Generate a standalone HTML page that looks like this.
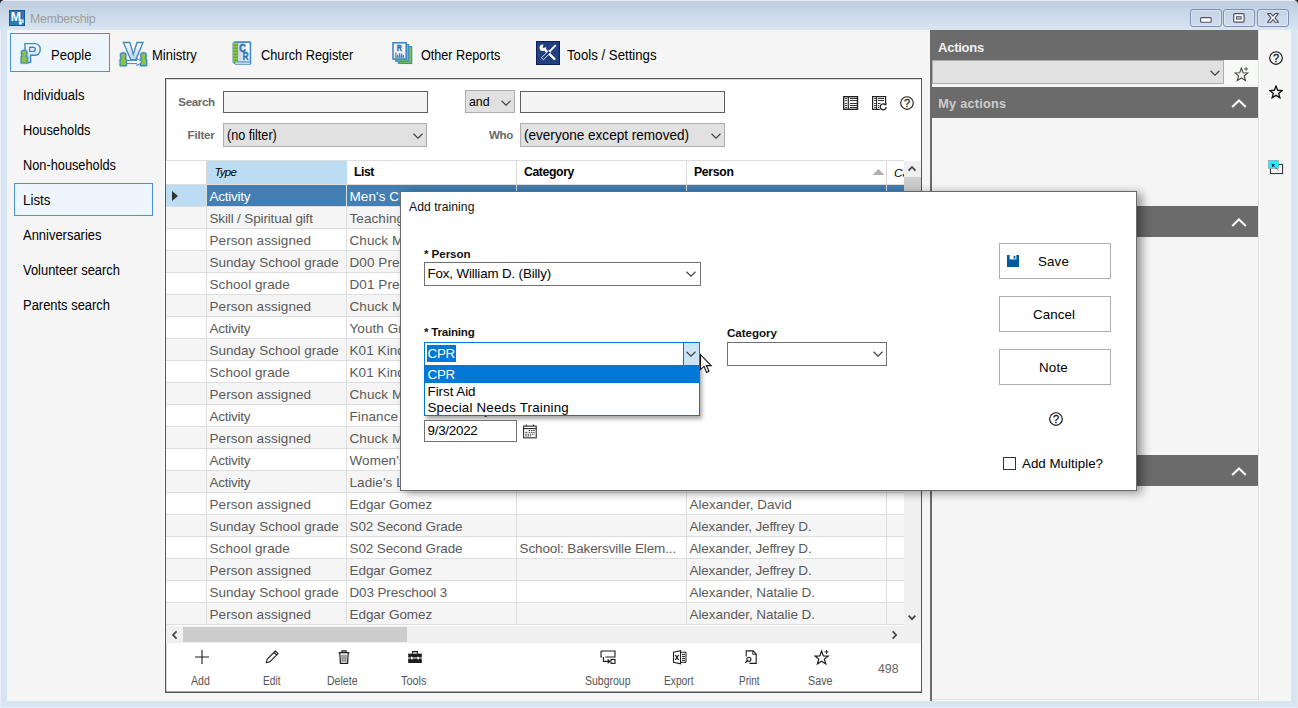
<!DOCTYPE html>
<html lang="en"><head><meta charset="utf-8"><title>Membership</title>
<style>
*{box-sizing:border-box;margin:0;padding:0}
html,body{width:1298px;height:708px;overflow:hidden}
body{position:relative;background:#d7e4f2;font-family:"Liberation Sans",sans-serif;font-size:13.33px;color:#000}
.abs,.abs>*{position:absolute}
#win{position:absolute;left:0;top:0;width:1298px;height:708px;overflow:hidden}
#win *{position:absolute;white-space:nowrap}
#titlebar{left:0;top:0;width:1298px;height:30px;background:linear-gradient(#e8ecf4 0,#e8ecf4 1px,#c0cfdf 1px,#c4d3e3 8px,#d8e5f3 30px)}
#client{left:7px;top:30px;width:1284px;height:671px;background:#f5f5f5}
#apptitle{left:30px;top:10px;font-size:12.3px;color:#9a9a9a;line-height:16px}
.tab{top:33px;height:39px;font-size:14.2px;line-height:39px;letter-spacing:-.35px}
.nav{left:23px;font-size:14px;line-height:18px;letter-spacing:-.25px}
#panel{left:165px;top:78px;width:757px;height:615px;background:#fff;border:1px solid #555;box-shadow:inset 1px 1px 0 rgba(0,0,0,.15),inset 0 -1px 0 rgba(0,0,0,.35),-1px -1px 0 #fff;height:615px}
.lbl{font-weight:bold;font-size:12px;color:#6d6d6d;line-height:16px}
.inp{background:#f4f4f4;border:1px solid #5f5f5f;height:22px}
.cmb{background:#e1e1e1;border:1px solid #adadad;height:24px;font-size:14.3px;line-height:22px;padding-left:3px}
.chev{width:9px;height:5px}
.th{top:161px;height:23px;line-height:22px;font-weight:bold;font-size:12.3px;border-right:1px solid #dcdcdc;padding-left:4px;background:#fff}
.tr{left:166px;width:738px;height:22px;border-bottom:1px solid #dedede;background:#fff;color:#5a5a5a;font-size:13.5px;line-height:24px}
.tr.alt{background:#f5f5f5}
.tr.sel{color:#fff}
.c{top:0;height:21px;overflow:hidden;border-right:1px solid #dedede;padding-left:2.5px}
.c0{left:0;width:41px;padding:0}.c1{left:41px;width:140px}.c2{left:181px;width:170px}.c3{left:351px;width:170px}.c4{left:521px;width:200px}.c5{left:721px;width:17px;border-right:0}
.sel .c1,.sel .c2,.sel .c3,.sel .c4,.sel .c5{background:#437fb3;border-right-color:#dedede}
.sel .c0{background:#bcdcf4}
.tri{left:6px;top:6px;width:0;height:0;border-left:6px solid #333;border-top:5px solid transparent;border-bottom:5px solid transparent}
.tool{top:672px;font-size:12px;color:#555;line-height:16px;letter-spacing:-.5px}
.hdr{left:932px;width:326px;background:#6b6b6b;color:#f0f0f0;font-weight:bold;font-size:13px}
#dlg{left:400px;top:191px;width:737px;height:300px;background:#fff;border:1px solid #6a6a6a;box-shadow:5px 2px 9px rgba(0,0,0,.4)}
.dl{font-weight:bold;font-size:11.5px;line-height:14px;color:#111}
.btn{width:112px;height:36px;border:1px solid #adadad;background:#fff}
.dcmb{background:#fff;border:1px solid #707070}
.wbtn{top:9px;width:32px;height:18px;border:1px solid #7d8fb2;border-radius:3px;background:linear-gradient(#c6d4e6,#cfdcec);box-shadow:inset 0 0 0 1px rgba(255,255,255,.35)}
#win b{position:static;font-weight:inherit}
</style></head><body>
<div id="win">
<div id="titlebar"></div>
<svg style="left:0px;top:0px;" width="5" height="5" viewBox="0 0 5 5"><path d="M0 0 H3.6 Q0.6 0.8 0 3.6 Z" fill="#222"/></svg>
<svg style="left:1293px;top:0px;" width="5" height="5" viewBox="0 0 5 5"><path d="M5 0 H1.4 Q4.4 0.8 5 3.6 Z" fill="#222"/></svg>
<svg style="left:9px;top:10px;" width="16" height="16" viewBox="0 0 16 16"><rect x="0.4" y="0.4" width="15.2" height="15.2" fill="#2b7bb8" stroke="#0e4c8c" stroke-width="0.9"/><text x="1.8" y="11.3" font-family="Liberation Sans,sans-serif" font-weight="bold" font-size="12" fill="#fff" textLength="10.2" lengthAdjust="spacingAndGlyphs">M</text><circle cx="11.4" cy="10.4" r="1.3" fill="#fff"/><path d="M9.9 14.4 V12.6 Q9.9 11.7 11.4 11.7 Q12.9 11.7 12.9 12.6 V14.4 Z" fill="#fff"/><rect x="12.4" y="9.4" width="2.4" height="3.6" fill="#b9d6ee"/></svg>
<span style="left:30px;top:10.70px;line-height:16px;font-size:12.3px;color:#9c9c9c;letter-spacing:-0.217px;">Membership</span>
<div class="wbtn" style="left:1190px"><svg style="left:8px;top:6px;" width="14" height="8" viewBox="0 0 14 8"><rect x="1.6" y="1.6" width="10.6" height="4.6" rx="1" fill="#fff" stroke="#4d5266" stroke-width="1.1"/></svg></div>
<div class="wbtn" style="left:1223px"><svg style="left:8px;top:2px;" width="14" height="12" viewBox="0 0 14 12"><rect x="1.7" y="1.7" width="10.4" height="8.4" rx="1.2" fill="#fff" stroke="#4d5266" stroke-width="1.2"/><rect x="4.6" y="4.7" width="4.6" height="2.4" fill="#cfdcec" stroke="#4d5266" stroke-width="1"/></svg></div>
<div class="wbtn" style="left:1257px"><svg style="left:8px;top:2px;" width="14" height="12" viewBox="0 0 14 12"><path d="M1.6 1.6 H4.9 L7 4.1 L9.1 1.6 H12.4 L9 5.9 L12.4 10.2 H9.1 L7 7.7 L4.9 10.2 H1.6 L5 5.9 Z" fill="#fff" stroke="#4d5266" stroke-width="1.1" stroke-linejoin="round"/></svg></div>
<div style="left:0;top:30px;width:1px;height:678px;background:#e9edf5"></div><div style="left:1297px;top:30px;width:1px;height:678px;background:#e9edf5"></div><div style="left:0;top:707px;width:1298px;height:1px;background:#e9edf5"></div>
<div id="client"></div>
<div style="left:10px;top:33px;width:100px;height:39px;border:1px solid #4a90e2;background:#eef6fd"></div>
<svg style="left:19px;top:40px;" width="24" height="26" viewBox="0 0 24 26"><defs><linearGradient id="gp" x1="0" y1="0" x2="0" y2="1"><stop offset="0" stop-color="#fff"/><stop offset="1" stop-color="#bfcde9"/></linearGradient><linearGradient id="gc" x1="0" y1="0" x2="1" y2="0"><stop offset="0" stop-color="#c3d2ea"/><stop offset="1" stop-color="#fff"/></linearGradient></defs><path d="M6 3.6 H15.2 Q21.2 3.6 21.2 9.4 Q21.2 15.3 15.2 15.3 H11.6 V22.6 H6 Z M10.6 7.2 V11.4 H14.4 Q16.2 11.4 16.2 9.3 Q16.2 7.2 14.4 7.2 Z" fill="url(#gp)" fill-rule="evenodd" stroke="#3b88c3" stroke-width="1.4" stroke-linejoin="round"/><g fill="none" stroke="#3b88c3" stroke-opacity=".3" stroke-width="2.6" stroke-linejoin="round"><path d="M2.10 23.00 V17.80 Q2.10 15.50 5.20 15.50 Q8.30 15.50 8.30 17.80 V23.00 Z"/><circle cx="5.2" cy="13.10" r="2.8"/></g><g fill="#8cc63f" stroke="#3b88c3" stroke-width="1.1" stroke-linejoin="round"><path d="M2.10 23.00 V17.80 Q2.10 15.50 5.20 15.50 Q8.30 15.50 8.30 17.80 V23.00 Z"/><circle cx="5.2" cy="13.10" r="2.8"/></g><rect x="3.60" y="14.80" width="3.2" height="2" fill="#8cc63f"/></svg>
<span style="left:51px;top:46.32px;line-height:18px;font-size:14.67px;transform:scaleX(0.8867);transform-origin:0 50%;">People</span>
<svg style="left:117px;top:40px;" width="32" height="28" viewBox="0 0 32 28"><path d="M6.4 2.5 H12.8 L16.3 14.3 L20 2.5 H26 L18.7 20 H13.9 Z" fill="url(#gp)" stroke="#3b88c3" stroke-width="1.3" stroke-linejoin="miter"/><g fill="none" stroke="#3b88c3" stroke-opacity=".3" stroke-width="2.6" stroke-linejoin="round"><path d="M3.10 25.60 V20.40 Q3.10 18.10 6.20 18.10 Q9.30 18.10 9.30 20.40 V25.60 Z"/><circle cx="6.2" cy="15.70" r="2.8"/></g><g fill="#8cc63f" stroke="#3b88c3" stroke-width="1.1" stroke-linejoin="round"><path d="M3.10 25.60 V20.40 Q3.10 18.10 6.20 18.10 Q9.30 18.10 9.30 20.40 V25.60 Z"/><circle cx="6.2" cy="15.70" r="2.8"/></g><rect x="4.60" y="17.40" width="3.2" height="2" fill="#8cc63f"/><g fill="none" stroke="#3b88c3" stroke-opacity=".3" stroke-width="2.6" stroke-linejoin="round"><path d="M23.40 25.60 V20.40 Q23.40 18.10 26.50 18.10 Q29.60 18.10 29.60 20.40 V25.60 Z"/><circle cx="26.5" cy="15.70" r="2.8"/></g><g fill="#8cc63f" stroke="#3b88c3" stroke-width="1.1" stroke-linejoin="round"><path d="M23.40 25.60 V20.40 Q23.40 18.10 26.50 18.10 Q29.60 18.10 29.60 20.40 V25.60 Z"/><circle cx="26.5" cy="15.70" r="2.8"/></g><rect x="24.90" y="17.40" width="3.2" height="2" fill="#8cc63f"/><path d="M9.6 20.4 H20 V18.4 L25 22 L20 25.6 V23.6 H9.6 Z" fill="#fff" stroke="#3b88c3" stroke-width="1"/></svg>
<span style="left:152px;top:46.32px;line-height:18px;font-size:14.67px;transform:scaleX(0.8867);transform-origin:0 50%;">Ministry</span>
<svg style="left:231px;top:40px;" width="22" height="26" viewBox="0 0 22 26"><path d="M3.4 1.2 H18.8 Q20.2 1.2 20.2 2.6 V23.4 Q20.2 24.8 18.8 24.8 H4.4 L1.6 22.4 V3 Z" fill="#3e8ac6"/><rect x="4.2" y="22.4" width="14.8" height="1.6" fill="#c4d9ee"/><rect x="7" y="3" width="11.6" height="18.4" fill="url(#gc)"/><rect x="1.9" y="2.6" width="5" height="19.6" fill="#8cc63f"/><path d="M1.9 5.2 H6.9 M1.9 8.2 H6.9 M1.9 11.2 H6.9 M1.9 14.2 H6.9 M1.9 17.2 H6.9 M1.9 20.2 H6.9" stroke="#4f9a3a" stroke-width="0.9"/><text x="8.2" y="12.2" font-family="Liberation Sans,sans-serif" font-weight="bold" font-size="11.8" fill="#2a72b2" stroke="#2a72b2" stroke-width="0.45" textLength="6.6" lengthAdjust="spacingAndGlyphs">C</text><text x="11.8" y="20.4" font-family="Liberation Sans,sans-serif" font-weight="bold" font-size="10.6" fill="#2a72b2" stroke="#2a72b2" stroke-width="0.45" textLength="5.8" lengthAdjust="spacingAndGlyphs">R</text></svg>
<span style="left:261px;top:46.32px;line-height:18px;font-size:14.67px;transform:scaleX(0.8709);transform-origin:0 50%;">Church Register</span>
<svg style="left:391px;top:41px;" width="23" height="25" viewBox="0 0 23 25"><rect x="7.6" y="5.8" width="13" height="16.6" fill="#8cc63f" stroke="#3e8ac6" stroke-width="1.3"/><rect x="4.7" y="3.8" width="13" height="16.4" fill="#8cc63f" stroke="#3e8ac6" stroke-width="1.3"/><rect x="2" y="1.8" width="13.2" height="16.2" fill="#f2f5fb" stroke="#3e8ac6" stroke-width="1.6"/><text x="5.8" y="10" font-family="Liberation Sans,sans-serif" font-weight="bold" font-size="9.6" fill="#2a72b2" stroke="#2a72b2" stroke-width="0.45" textLength="5.2" lengthAdjust="spacingAndGlyphs">R</text><g fill="#3f7fbf"><rect x="4.2" y="11.4" width="1.2" height="5"/><rect x="6" y="13.6" width="1.3" height="2.6"/><rect x="7.9" y="12.2" width="1.4" height="4"/><rect x="9.9" y="12.6" width="1.4" height="3.6"/><rect x="11.7" y="14" width="1.3" height="2.2"/><rect x="4.2" y="15.6" width="9" height="1"/></g></svg>
<span style="left:421px;top:46.32px;line-height:18px;font-size:14.67px;transform:scaleX(0.8608);transform-origin:0 50%;">Other Reports</span>
<svg style="left:536px;top:41px;" width="24" height="24" viewBox="0 0 24 24"><rect x="0.5" y="0.5" width="23" height="23" fill="#22407f" stroke="#0c1f58" stroke-width="1"/><path d="M8.6 8.4 L18.4 17.8" stroke="#fff" stroke-width="2.3" stroke-linecap="round"/><circle cx="6.9" cy="6.7" r="3.3" fill="#fff"/><path d="M6.6 7 L8 1.6 L12.4 5.8 Z" fill="#22407f"/><path d="M19.3 4.7 L13.6 10.4" stroke="#fff" stroke-width="1.9" stroke-linecap="round"/><path d="M12.6 9.6 L14.6 11.6 L7.4 18.8 L5.4 16.8 Z" fill="#22407f" stroke="#e8f0ff" stroke-width="0.9"/></svg>
<span style="left:567px;top:46.32px;line-height:18px;font-size:14.67px;transform:scaleX(0.9008);transform-origin:0 50%;">Tools / Settings</span>
<div style="left:14px;top:183px;width:139px;height:33px;border:1px solid #4a90e2;background:#eef6fd"></div>
<span style="left:23px;top:86.15px;line-height:18px;font-size:14px;transform:scaleX(0.9297);transform-origin:0 50%;">Individuals</span>
<span style="left:23px;top:121.15px;line-height:18px;font-size:14px;transform:scaleX(0.9129);transform-origin:0 50%;">Households</span>
<span style="left:23px;top:156.15px;line-height:18px;font-size:14px;transform:scaleX(0.9121);transform-origin:0 50%;">Non-households</span>
<span style="left:23px;top:191.15px;line-height:18px;font-size:14px;transform:scaleX(0.9553);transform-origin:0 50%;">Lists</span>
<span style="left:23px;top:226.15px;line-height:18px;font-size:14px;transform:scaleX(0.9256);transform-origin:0 50%;">Anniversaries</span>
<span style="left:23px;top:261.15px;line-height:18px;font-size:14px;transform:scaleX(0.9232);transform-origin:0 50%;">Volunteer search</span>
<span style="left:23px;top:296.15px;line-height:18px;font-size:14px;transform:scaleX(0.9240);transform-origin:0 50%;">Parents search</span>
<div id="panel"></div>
<span style="left:178.3px;top:94.00px;line-height:16px;font-size:11.6px;font-weight:bold;color:#6a6a6a;letter-spacing:-0.382px;">Search</span>
<div class="inp" style="left:223px;top:91px;width:205px"></div>
<div class="cmb" style="left:465px;top:90px;width:50px;height:23px"></div>
<span style="left:469px;top:93.30px;line-height:18px;font-size:12.4px;letter-spacing:-0.064px;">and</span>
<svg style="left:501px;top:99.5px;" width="10" height="6" viewBox="0 0 10 6"><path d="M0.5 0.8 L5 5.2 L9.5 0.8" fill="none" stroke="#444" stroke-width="1.2"/></svg>
<div class="inp" style="left:520px;top:91px;width:205px"></div>
<span style="left:187.6px;top:127.00px;line-height:16px;font-size:11.6px;font-weight:bold;color:#6a6a6a;letter-spacing:-0.227px;">Filter</span>
<div class="cmb" style="left:223px;top:123px;width:204px"></div>
<span style="left:227.3px;top:126.30px;line-height:18px;font-size:14px;transform:scaleX(0.9016);transform-origin:0 50%;">(no filter)</span>
<svg style="left:413px;top:133px;" width="10" height="6" viewBox="0 0 10 6"><path d="M0.5 0.8 L5 5.2 L9.5 0.8" fill="none" stroke="#444" stroke-width="1.2"/></svg>
<span style="left:489px;top:127.00px;line-height:16px;font-size:11.6px;font-weight:bold;color:#6a6a6a;letter-spacing:-0.373px;">Who</span>
<div class="cmb" style="left:520px;top:123px;width:205px"></div>
<span style="left:524px;top:126.30px;line-height:18px;font-size:14px;transform:scaleX(0.9682);transform-origin:0 50%;">(everyone except removed)</span>
<svg style="left:711px;top:133px;" width="10" height="6" viewBox="0 0 10 6"><path d="M0.5 0.8 L5 5.2 L9.5 0.8" fill="none" stroke="#444" stroke-width="1.2"/></svg>
<svg style="left:843px;top:96px;" width="16" height="14" viewBox="0 0 16 14"><rect x="0.7" y="0.7" width="13.8" height="12.6" fill="#fff" stroke="#222" stroke-width="1.4"/><path d="M5.3 1 V13" stroke="#222" stroke-width="1.2"/><path shape-rendering="crispEdges" d="M6.6 2.5 H13.6 M6.6 4.5 H13.6 M6.6 7.5 H13.6 M6.6 9.5 H13.6 M6.6 11.5 H13.6" stroke="#333" stroke-width="1"/><path shape-rendering="crispEdges" d="M2 2.5 H4 M2 4.5 H4 M2 7.5 H4 M2 9.5 H4 M2 11.5 H4" stroke="#444" stroke-width="1"/></svg>
<svg style="left:872px;top:96px;" width="17" height="16" viewBox="0 0 17 16"><rect x="0.6" y="0.6" width="13" height="12.8" fill="#fff" stroke="#222" stroke-width="1.2"/><path d="M4.6 1 V13" stroke="#222" stroke-width="1.1"/><path shape-rendering="crispEdges" d="M6 2.5 H12.4 M6 4.5 H12.4 M6 7.5 H9 M6 9.5 H8 M6 11.5 H8" stroke="#333" stroke-width="1"/><path shape-rendering="crispEdges" d="M1.8 2.5 H3.6 M1.8 4.5 H3.6 M1.8 7.5 H3.6 M1.8 9.5 H3.6 M1.8 11.5 H3.6" stroke="#444" stroke-width="1"/><circle cx="11.2" cy="10.7" r="4.3" fill="#fff"/><path d="M13.6 9 A3 3 0 1 0 14.2 10.9" fill="none" stroke="#222" stroke-width="1.3"/><path d="M11.8 8.6 L14.4 9.4 L14.6 6.8 Z" fill="#222"/></svg>
<svg style="left:899px;top:95px;" width="16" height="16" viewBox="0 0 16 16"><circle cx="8" cy="8" r="6.3" fill="none" stroke="#222" stroke-width="1.15"/><text x="8" y="11.9" text-anchor="middle" font-family="Liberation Sans,sans-serif" font-size="11" stroke="#222" stroke-width="0.3" fill="#222">?</text></svg>
<div style="left:166px;top:160px;width:738px;height:1px;background:#dedede"></div>
<div class="th" style="left:166px;width:41px"></div>
<div class="th" style="left:207px;width:140px;background:#bcdcf4;border-right-color:#bcdcf4"></div>
<div class="th" style="left:347px;width:170px"></div>
<div class="th" style="left:517px;width:170px"></div>
<div class="th" style="left:687px;width:200px"></div>
<div class="th" style="left:887px;width:17px;border-right:0;overflow:hidden"></div>
<span style="left:214.5px;top:163.50px;line-height:16px;font-size:11.4px;font-style:italic;letter-spacing:-0.750px;">Type</span>
<span style="left:354px;top:163.80px;line-height:16px;font-size:12.2px;font-weight:bold;letter-spacing:-0.422px;">List</span>
<span style="left:524px;top:163.80px;line-height:16px;font-size:12.2px;font-weight:bold;letter-spacing:-0.360px;">Category</span>
<span style="left:694px;top:163.80px;line-height:16px;font-size:12.2px;font-weight:bold;letter-spacing:-0.293px;">Person</span>
<div style="left:894px;top:164px;width:10px;height:18px;overflow:hidden"><span style="left:0px;top:1.00px;line-height:16px;font-size:11.8px;font-style:italic;">Ca</span></div>
<svg style="left:872px;top:168px;" width="13" height="8" viewBox="0 0 13 8"><path d="M0.5 7 L6.5 1 L12.5 7 Z" fill="#b0b0b0"/></svg>
<div style="left:166px;top:184px;width:738px;height:1px;background:#dedede"></div>
<div class="tr sel" style="top:185px"><span class="c c0"><i class="tri"></i></span><span class="c c1"><b style="letter-spacing:-0.257px">Activity</b></span><span class="c c2"><b style="letter-spacing:0.081px">Men's Club</b></span><span class="c c3"></span><span class="c c4"><b style="letter-spacing:0.021px">Alexander, David</b></span><span class="c c5"></span></div>
<div class="tr alt" style="top:207px"><span class="c c0"></span><span class="c c1"><b style="letter-spacing:-0.147px">Skill / Spiritual gift</b></span><span class="c c2"><b style="letter-spacing:0.081px">Teaching</b></span><span class="c c3"></span><span class="c c4"><b style="letter-spacing:0.021px">Alexander, David</b></span><span class="c c5"></span></div>
<div class="tr " style="top:229px"><span class="c c0"></span><span class="c c1"><b style="letter-spacing:0.076px">Person assigned</b></span><span class="c c2"><b style="letter-spacing:0.080px">Chuck Martin</b></span><span class="c c3"></span><span class="c c4"><b style="letter-spacing:0.021px">Alexander, David</b></span><span class="c c5"></span></div>
<div class="tr alt" style="top:251px"><span class="c c0"></span><span class="c c1"><b style="letter-spacing:0.016px">Sunday School grade</b></span><span class="c c2"><b style="letter-spacing:0.082px">D00 Preschool</b></span><span class="c c3"></span><span class="c c4"><b style="letter-spacing:0.021px">Alexander, David</b></span><span class="c c5"></span></div>
<div class="tr " style="top:273px"><span class="c c0"></span><span class="c c1"><b style="letter-spacing:0.070px">School grade</b></span><span class="c c2"><b style="letter-spacing:0.082px">D01 Preschool</b></span><span class="c c3"></span><span class="c c4"><b style="letter-spacing:0.021px">Alexander, David</b></span><span class="c c5"></span></div>
<div class="tr alt" style="top:295px"><span class="c c0"></span><span class="c c1"><b style="letter-spacing:0.076px">Person assigned</b></span><span class="c c2"><b style="letter-spacing:0.080px">Chuck Martin</b></span><span class="c c3"></span><span class="c c4"><b style="letter-spacing:0.021px">Alexander, David</b></span><span class="c c5"></span></div>
<div class="tr " style="top:317px"><span class="c c0"></span><span class="c c1"><b style="letter-spacing:-0.257px">Activity</b></span><span class="c c2"><b style="letter-spacing:0.082px">Youth Group</b></span><span class="c c3"></span><span class="c c4"><b style="letter-spacing:0.021px">Alexander, David</b></span><span class="c c5"></span></div>
<div class="tr alt" style="top:339px"><span class="c c0"></span><span class="c c1"><b style="letter-spacing:0.016px">Sunday School grade</b></span><span class="c c2"><b style="letter-spacing:0.079px">K01 Kindergarten</b></span><span class="c c3"></span><span class="c c4"><b style="letter-spacing:0.021px">Alexander, David</b></span><span class="c c5"></span></div>
<div class="tr " style="top:361px"><span class="c c0"></span><span class="c c1"><b style="letter-spacing:0.070px">School grade</b></span><span class="c c2"><b style="letter-spacing:0.079px">K01 Kindergarten</b></span><span class="c c3"></span><span class="c c4"><b style="letter-spacing:0.021px">Alexander, David</b></span><span class="c c5"></span></div>
<div class="tr alt" style="top:383px"><span class="c c0"></span><span class="c c1"><b style="letter-spacing:0.076px">Person assigned</b></span><span class="c c2"><b style="letter-spacing:0.080px">Chuck Martin</b></span><span class="c c3"></span><span class="c c4"><b style="letter-spacing:0.021px">Alexander, David</b></span><span class="c c5"></span></div>
<div class="tr " style="top:405px"><span class="c c0"></span><span class="c c1"><b style="letter-spacing:-0.257px">Activity</b></span><span class="c c2"><b style="letter-spacing:0.083px">Finance Committee</b></span><span class="c c3"></span><span class="c c4"><b style="letter-spacing:0.021px">Alexander, David</b></span><span class="c c5"></span></div>
<div class="tr alt" style="top:427px"><span class="c c0"></span><span class="c c1"><b style="letter-spacing:0.076px">Person assigned</b></span><span class="c c2"><b style="letter-spacing:0.080px">Chuck Martin</b></span><span class="c c3"></span><span class="c c4"><b style="letter-spacing:0.021px">Alexander, David</b></span><span class="c c5"></span></div>
<div class="tr " style="top:449px"><span class="c c0"></span><span class="c c1"><b style="letter-spacing:-0.257px">Activity</b></span><span class="c c2"><b style="letter-spacing:0.089px">Women's Group</b></span><span class="c c3"></span><span class="c c4"><b style="letter-spacing:0.021px">Alexander, David</b></span><span class="c c5"></span></div>
<div class="tr alt" style="top:471px"><span class="c c0"></span><span class="c c1"><b style="letter-spacing:-0.257px">Activity</b></span><span class="c c2"><b style="letter-spacing:0.079px">Ladie's Luncheon</b></span><span class="c c3"></span><span class="c c4"><b style="letter-spacing:0.021px">Alexander, David</b></span><span class="c c5"></span></div>
<div class="tr " style="top:493px"><span class="c c0"></span><span class="c c1"><b style="letter-spacing:0.076px">Person assigned</b></span><span class="c c2"><b style="letter-spacing:-0.053px">Edgar Gomez</b></span><span class="c c3"></span><span class="c c4"><b style="letter-spacing:0.021px">Alexander, David</b></span><span class="c c5"></span></div>
<div class="tr alt" style="top:515px"><span class="c c0"></span><span class="c c1"><b style="letter-spacing:0.016px">Sunday School grade</b></span><span class="c c2"><b style="letter-spacing:-0.114px">S02 Second Grade</b></span><span class="c c3"></span><span class="c c4"><b style="letter-spacing:-0.146px">Alexander, Jeffrey D.</b></span><span class="c c5"></span></div>
<div class="tr " style="top:537px"><span class="c c0"></span><span class="c c1"><b style="letter-spacing:0.070px">School grade</b></span><span class="c c2"><b style="letter-spacing:-0.114px">S02 Second Grade</b></span><span class="c c3"><b style="letter-spacing:-0.119px">School: Bakersville Elem...</b></span><span class="c c4"><b style="letter-spacing:-0.146px">Alexander, Jeffrey D.</b></span><span class="c c5"></span></div>
<div class="tr alt" style="top:559px"><span class="c c0"></span><span class="c c1"><b style="letter-spacing:0.076px">Person assigned</b></span><span class="c c2"><b style="letter-spacing:-0.053px">Edgar Gomez</b></span><span class="c c3"></span><span class="c c4"><b style="letter-spacing:-0.146px">Alexander, Jeffrey D.</b></span><span class="c c5"></span></div>
<div class="tr " style="top:581px"><span class="c c0"></span><span class="c c1"><b style="letter-spacing:0.016px">Sunday School grade</b></span><span class="c c2"><b style="letter-spacing:-0.140px">D03 Preschool 3</b></span><span class="c c3"></span><span class="c c4"><b style="letter-spacing:-0.067px">Alexander, Natalie D.</b></span><span class="c c5"></span></div>
<div class="tr alt" style="top:603px"><span class="c c0"></span><span class="c c1"><b style="letter-spacing:0.076px">Person assigned</b></span><span class="c c2"><b style="letter-spacing:-0.053px">Edgar Gomez</b></span><span class="c c3"></span><span class="c c4"><b style="letter-spacing:-0.067px">Alexander, Natalie D.</b></span><span class="c c5"></span></div>
<div style="left:904px;top:161px;width:17px;height:465px;background:#f0f0f0"></div>
<div style="left:904px;top:177px;width:17px;height:18px;background:#cdcdcd"></div>
<svg style="left:906px;top:164px;" width="12" height="9" viewBox="0 0 12 9"><path d="M2.6 6.6 L6 3 L9.4 6.6" fill="none" stroke="#444" stroke-width="1.7"/></svg>
<svg style="left:906px;top:613px;" width="12" height="9" viewBox="0 0 12 9"><path d="M2.6 2.6 L6 6.2 L9.4 2.6" fill="none" stroke="#444" stroke-width="1.7"/></svg>
<div style="left:166px;top:626px;width:755px;height:17px;background:#f0f0f0"></div>
<div style="left:183px;top:627px;width:224px;height:15px;background:#cdcdcd"></div>
<svg style="left:170px;top:629px;" width="9" height="12" viewBox="0 0 9 12"><path d="M6.6 2.4 L3 6 L6.6 9.6" fill="none" stroke="#444" stroke-width="1.7"/></svg>
<svg style="left:890px;top:629px;" width="9" height="12" viewBox="0 0 9 12"><path d="M2.6 2.4 L6.2 6 L2.6 9.6" fill="none" stroke="#444" stroke-width="1.7"/></svg>
<svg style="left:194px;top:648.5px;" width="16" height="16" viewBox="0 0 16 16"><path d="M8 1 V15 M1 8 H15" stroke="#1c1c1c" stroke-width="1.1"/></svg>
<svg style="left:264px;top:649px;" width="16" height="16" viewBox="0 0 16 16"><path d="M2.2 13.8 L3.2 10.2 L11.4 2 L14 4.6 L5.8 12.8 Z M10 3.4 L12.6 6" fill="none" stroke="#1c1c1c" stroke-width="1.1" stroke-linejoin="round"/></svg>
<svg style="left:336px;top:649px;" width="16" height="16" viewBox="0 0 16 16"><path d="M2.6 3.6 H13.4 M6 3.4 V1.8 H10 V3.4 M3.8 3.8 L4.4 14.4 H11.6 L12.2 3.8" fill="none" stroke="#1c1c1c" stroke-width="1.2"/><path d="M6.1 5.6 V12.8 M8 5.6 V12.8 M9.9 5.6 V12.8" stroke="#1c1c1c" stroke-width="0.8"/></svg>
<svg style="left:407px;top:650px;" width="16" height="14" viewBox="0 0 16 14"><path d="M5.6 3.6 V1.6 H10.4 V3.6" fill="none" stroke="#1c1c1c" stroke-width="1.2"/><rect x="1.2" y="3.6" width="13.6" height="9.4" fill="#1c1c1c"/><path d="M1 8 H15" stroke="#fff" stroke-width="1"/><rect x="4" y="6.8" width="1.6" height="2.6" fill="#fff"/><rect x="10.4" y="6.8" width="1.6" height="2.6" fill="#fff"/></svg>
<svg style="left:600px;top:650px;" width="17" height="15" viewBox="0 0 17 15"><path d="M1 1 H15 V7 H5.4" fill="none" stroke="#1c1c1c" stroke-width="1.1"/><path d="M1 1 V7 H2" fill="none" stroke="#1c1c1c" stroke-width="1.1"/><path d="M3.4 7 V11.4 H9.4 M7.6 9.4 L9.8 11.4 L7.6 13.4" fill="none" stroke="#1c1c1c" stroke-width="1.1"/><rect x="11" y="9.4" width="4" height="4" fill="none" stroke="#1c1c1c" stroke-width="1.1"/></svg>
<svg style="left:671px;top:650px;" width="16" height="15" viewBox="0 0 16 15"><path d="M2.5 2.2 L9.5 0.7 V13.8 L2.5 12.3 Z" fill="none" stroke="#1c1c1c" stroke-width="1.1"/><path d="M4.3 5 L7.6 10 M7.6 5 L4.3 10" stroke="#1c1c1c" stroke-width="1.3"/><path d="M9.5 2.2 H15 V12.3 H9.5" fill="none" stroke="#1c1c1c" stroke-width="1"/><path d="M11 4.4 H14 M11 6.4 H14 M11 8.4 H14 M11 10.4 H14" stroke="#1c1c1c" stroke-width="1"/></svg>
<svg style="left:742px;top:649px;" width="16" height="17" viewBox="0 0 16 17"><path d="M4.2 7.6 V1.9 H11 L14.2 5.1 V14.4 H7.4" fill="none" stroke="#1c1c1c" stroke-width="1.1"/><path d="M10.8 2.1 V5.3 H14" fill="none" stroke="#1c1c1c" stroke-width="0.9"/><circle cx="6.9" cy="10.2" r="2" fill="#fff" stroke="#1c1c1c" stroke-width="1.1"/><path d="M5.4 11.7 L3.2 13.9" stroke="#1c1c1c" stroke-width="1.3"/></svg>
<svg style="left:814.3px;top:649px;" width="17.2" height="17.2" viewBox="0 0 17.2 17.2"><path d="M7.60 2.00 L9.36 6.84 L14.20 7.06 L10.46 10.14 L11.78 14.98 L7.60 12.23 L3.42 14.98 L4.74 10.14 L1.00 7.06 L5.84 6.84 Z" fill="none" stroke="#1c1c1c" stroke-width="1.2" stroke-linejoin="miter"/><path d="M10.50 2.90 H14.50 M12.50 0.90 V4.90" stroke="#1c1c1c" stroke-width="0.9"/></svg>
<span style="left:190.8px;top:672.64px;line-height:16px;font-size:12px;color:#555;transform:scaleX(0.8805);transform-origin:0 50%;">Add</span>
<span style="left:263px;top:672.64px;line-height:16px;font-size:12px;color:#555;transform:scaleX(0.8463);transform-origin:0 50%;">Edit</span>
<span style="left:327px;top:672.64px;line-height:16px;font-size:12px;color:#555;transform:scaleX(0.8793);transform-origin:0 50%;">Delete</span>
<span style="left:401px;top:672.64px;line-height:16px;font-size:12px;color:#555;transform:scaleX(0.9103);transform-origin:0 50%;">Tools</span>
<span style="left:585px;top:672.64px;line-height:16px;font-size:12px;color:#555;transform:scaleX(0.8743);transform-origin:0 50%;">Subgroup</span>
<span style="left:664px;top:672.64px;line-height:16px;font-size:12px;color:#555;transform:scaleX(0.8506);transform-origin:0 50%;">Export</span>
<span style="left:739px;top:672.64px;line-height:16px;font-size:12px;color:#555;transform:scaleX(0.8308);transform-origin:0 50%;">Print</span>
<span style="left:808px;top:672.64px;line-height:16px;font-size:12px;color:#555;transform:scaleX(0.8957);transform-origin:0 50%;">Save</span>
<span style="left:878px;top:661.00px;line-height:16px;font-size:12px;color:#666;transform:scaleX(1.0240);transform-origin:0 50%;">498</span>
<div style="left:930px;top:30px;width:2px;height:671px;background:#6b6b6b"></div>
<div style="left:1258px;top:30px;width:1px;height:670px;background:#e0e0e0"></div>
<div style="left:1259px;top:30px;width:1px;height:671px;background:#fff"></div>
<div style="left:932px;top:699px;width:327px;height:1px;background:#e0e0e0"></div>
<div style="left:932px;top:700px;width:328px;height:1px;background:#fff"></div>
<div class="hdr" style="top:30px;height:30px"></div>
<span style="left:938px;top:39.50px;line-height:16px;font-size:13px;font-weight:bold;color:#f2f2f2;letter-spacing:-0.239px;">Actions</span>
<div class="cmb" style="left:932px;top:60px;width:292px"></div>
<svg style="left:1210px;top:70px;" width="10" height="6" viewBox="0 0 10 6"><path d="M0.5 0.8 L5 5.2 L9.5 0.8" fill="none" stroke="#444" stroke-width="1.2"/></svg>
<div style="left:1224px;top:60px;width:34px;height:24px;background:#f7f9f7"></div>
<svg style="left:1233.5px;top:66px;" width="16.8" height="16.8" viewBox="0 0 16.8 16.8"><path d="M7.40 2.00 L9.11 6.69 L13.80 6.91 L10.17 9.89 L11.45 14.59 L7.40 11.92 L3.35 14.59 L4.63 9.89 L1.00 6.91 L5.69 6.69 Z" fill="none" stroke="#444" stroke-width="1.1" stroke-linejoin="miter"/><path d="M10.10 2.90 H14.10 M12.10 0.90 V4.90" stroke="#444" stroke-width="0.9"/></svg>
<div class="hdr" style="top:87px;height:31px"></div>
<span style="left:938.3px;top:95.70px;line-height:16px;font-size:12.7px;font-weight:bold;color:#cdcdcd;letter-spacing:0.237px;">My actions</span>
<svg style="left:1231px;top:98.5px;" width="16" height="9" viewBox="0 0 16 9"><path d="M1.2 8 L8 1.5 L14.8 8" fill="none" stroke="#fff" stroke-width="2"/></svg>
<div class="hdr" style="top:206px;height:31px"></div>
<svg style="left:1231px;top:217.5px;" width="16" height="9" viewBox="0 0 16 9"><path d="M1.2 8 L8 1.5 L14.8 8" fill="none" stroke="#fff" stroke-width="2"/></svg>
<div class="hdr" style="top:455px;height:31px"></div>
<svg style="left:1231px;top:466.5px;" width="16" height="9" viewBox="0 0 16 9"><path d="M1.2 8 L8 1.5 L14.8 8" fill="none" stroke="#fff" stroke-width="2"/></svg>
<svg style="left:1268px;top:50px;" width="16" height="16" viewBox="0 0 16 16"><circle cx="8" cy="8" r="6.3" fill="none" stroke="#111" stroke-width="1.15"/><text x="8" y="11.9" text-anchor="middle" font-family="Liberation Sans,sans-serif" font-size="11" stroke="#111" stroke-width="0.3" fill="#111">?</text></svg>
<svg style="left:1269px;top:85px;" width="14" height="14" viewBox="0 0 16 16"><path d="M8 1.2 L9.9 6 L15 6.3 L11 9.6 L12.4 14.6 L8 11.8 L3.6 14.6 L5 9.6 L1 6.3 L6.1 6 Z" fill="none" stroke="#111" stroke-width="1.5"/></svg>
<svg style="left:1267px;top:159px;" width="18" height="17" viewBox="0 0 18 17"><rect x="2.4" y="4.4" width="14.2" height="11.2" fill="#b5eaf6"/><rect x="3.5" y="5.5" width="12" height="9" fill="#f2f2f2" stroke="#3a3838" stroke-width="1"/><rect x="1.3" y="1.3" width="10.4" height="8.2" fill="#00ffff" stroke="#a89a9a" stroke-width="0.6"/><path d="M11.2 11.4 L6.4 6.6" stroke="#2a1a3a" stroke-width="0.9" stroke-dasharray="1.4 0.7"/><path d="M4.7 4.9 L8.2 5.4 L5.3 8.3 Z" fill="#2a1a3a"/></svg>
<div id="dlg"><span style="left:8px;top:7.00px;line-height:16px;font-size:12.2px;color:#111;letter-spacing:0.033px;">Add training</span>
<span style="left:23px;top:54.50px;line-height:14px;font-size:11.6px;font-weight:bold;color:#111;letter-spacing:-0.071px;">* Person</span>
<div class="dcmb" style="left:23px;top:70px;width:277px;height:24px"></div>
<span style="left:26.5px;top:73.00px;line-height:18px;font-size:13.33px;letter-spacing:-0.136px;">Fox, William D. (Billy)</span>
<svg style="left:285px;top:79px;" width="10" height="6" viewBox="0 0 10 6"><path d="M0.5 0.8 L5 5.2 L9.5 0.8" fill="none" stroke="#444" stroke-width="1.2"/></svg>
<span style="left:23px;top:133.00px;line-height:14px;font-size:11.6px;font-weight:bold;color:#111;letter-spacing:-0.235px;">* Training</span>
<span style="left:326px;top:134.00px;line-height:14px;font-size:11.6px;font-weight:bold;color:#111;letter-spacing:-0.035px;">Category</span>
<div class="dcmb" style="left:326px;top:150px;width:160px;height:24px"></div>
<svg style="left:472px;top:159px;" width="10" height="6" viewBox="0 0 10 6"><path d="M0.5 0.8 L5 5.2 L9.5 0.8" fill="none" stroke="#444" stroke-width="1.2"/></svg>
<span style="left:23px;top:212.00px;line-height:14px;font-size:11.6px;font-weight:bold;color:#111;">* Date completed</span>
<div style="left:23px;top:150px;width:276px;height:24px;background:#fff;border:1px solid #0078d7"></div>
<div style="left:282px;top:150px;width:17px;height:24px;background:#cce4f7;border:1px solid #0078d7"></div>
<svg style="left:285px;top:159px;" width="10" height="6" viewBox="0 0 10 6"><path d="M0.5 0.8 L5 5.2 L9.5 0.8" fill="none" stroke="#444" stroke-width="1.2"/></svg>
<div style="left:25.5px;top:153px;width:29.5px;height:16.5px;background:#0078d7"></div>
<span style="left:26.5px;top:152.50px;line-height:18px;font-size:13.33px;color:#fff;letter-spacing:-0.215px;">CPR</span>
<div style="left:23px;top:173px;width:276px;height:51px;background:#fff;border:1px solid #0078d7;box-shadow:2px 3px 4px rgba(0,0,0,.35)"></div>
<div style="left:24px;top:174px;width:274px;height:16.5px;background:#0078d7"></div>
<span style="left:26.5px;top:174.00px;line-height:18px;font-size:13.33px;color:#fff;letter-spacing:-0.215px;">CPR</span>
<span style="left:26.5px;top:190.50px;line-height:18px;font-size:13.33px;letter-spacing:-0.016px;">First Aid</span>
<span style="left:26.5px;top:206.50px;line-height:18px;font-size:13.33px;letter-spacing:0.201px;">Special Needs Training</span>
<div class="dcmb" style="left:23px;top:228px;width:93px;height:22px"></div>
<span style="left:26.5px;top:230.00px;line-height:18px;font-size:13.33px;letter-spacing:-0.236px;">9/3/2022</span>
<svg style="left:122.29999999999995px;top:232px;" width="14.2" height="14.6" viewBox="0 0 15 15"><rect x="0.6" y="2" width="13.4" height="12.4" fill="#fff" stroke="#333" stroke-width="1.2"/><path d="M0.6 4.6 H14" stroke="#333" stroke-width="1.2"/><path d="M3.6 0.4 V2.4 M11 0.4 V2.4" stroke="#333" stroke-width="1.2"/><path d="M6 6.6 H12.4 M6 8.6 H12.4 M2.4 10.6 H12.4 M2.4 12.4 H9" stroke="#333" stroke-width="1" stroke-dasharray="1.6 0.8"/><path d="M2.4 8.6 H4.6" stroke="#333" stroke-width="1"/></svg>
<div class="btn" style="left:598px;top:51px"></div>
<span style="left:637px;top:60.50px;line-height:18px;font-size:13.33px;letter-spacing:0.154px;">Save</span>
<div class="btn" style="left:598px;top:104px"></div>
<span style="left:632px;top:113.50px;line-height:18px;font-size:13.33px;letter-spacing:0.084px;">Cancel</span>
<div class="btn" style="left:598px;top:157px"></div>
<span style="left:638px;top:166.50px;line-height:18px;font-size:13.33px;letter-spacing:0.211px;">Note</span>
<svg style="left:606px;top:63px;" width="12" height="12" viewBox="0 0 12 12"><path d="M0 0 H12 V12 H0 Z" fill="#005a9e"/><rect x="2.6" y="0" width="6.8" height="4.4" fill="#fff"/><rect x="6.6" y="0.8" width="1.8" height="2.8" fill="#005a9e"/></svg>
<svg style="left:647px;top:219px;" width="16" height="16" viewBox="0 0 16 16"><circle cx="8" cy="8" r="6.3" fill="none" stroke="#111" stroke-width="1.15"/><text x="8" y="11.9" text-anchor="middle" font-family="Liberation Sans,sans-serif" font-size="11" stroke="#111" stroke-width="0.3" fill="#111">?</text></svg>
<div style="left:602px;top:265px;width:13px;height:13px;border:1px solid #333;background:#fff"></div>
<span style="left:621px;top:262.50px;line-height:18px;font-size:13.33px;letter-spacing:0.018px;">Add Multiple?</span></div>
<svg style="left:699px;top:353px;" width="14" height="21" viewBox="0 0 14 21"><path d="M1.5 1.5 V16.6 L5 13.4 L7.6 19.4 L10 18.3 L7.4 12.6 H12.2 Z" fill="#fff" stroke="#111" stroke-width="1.1" stroke-linejoin="miter"/></svg>
</div>
</body></html>
